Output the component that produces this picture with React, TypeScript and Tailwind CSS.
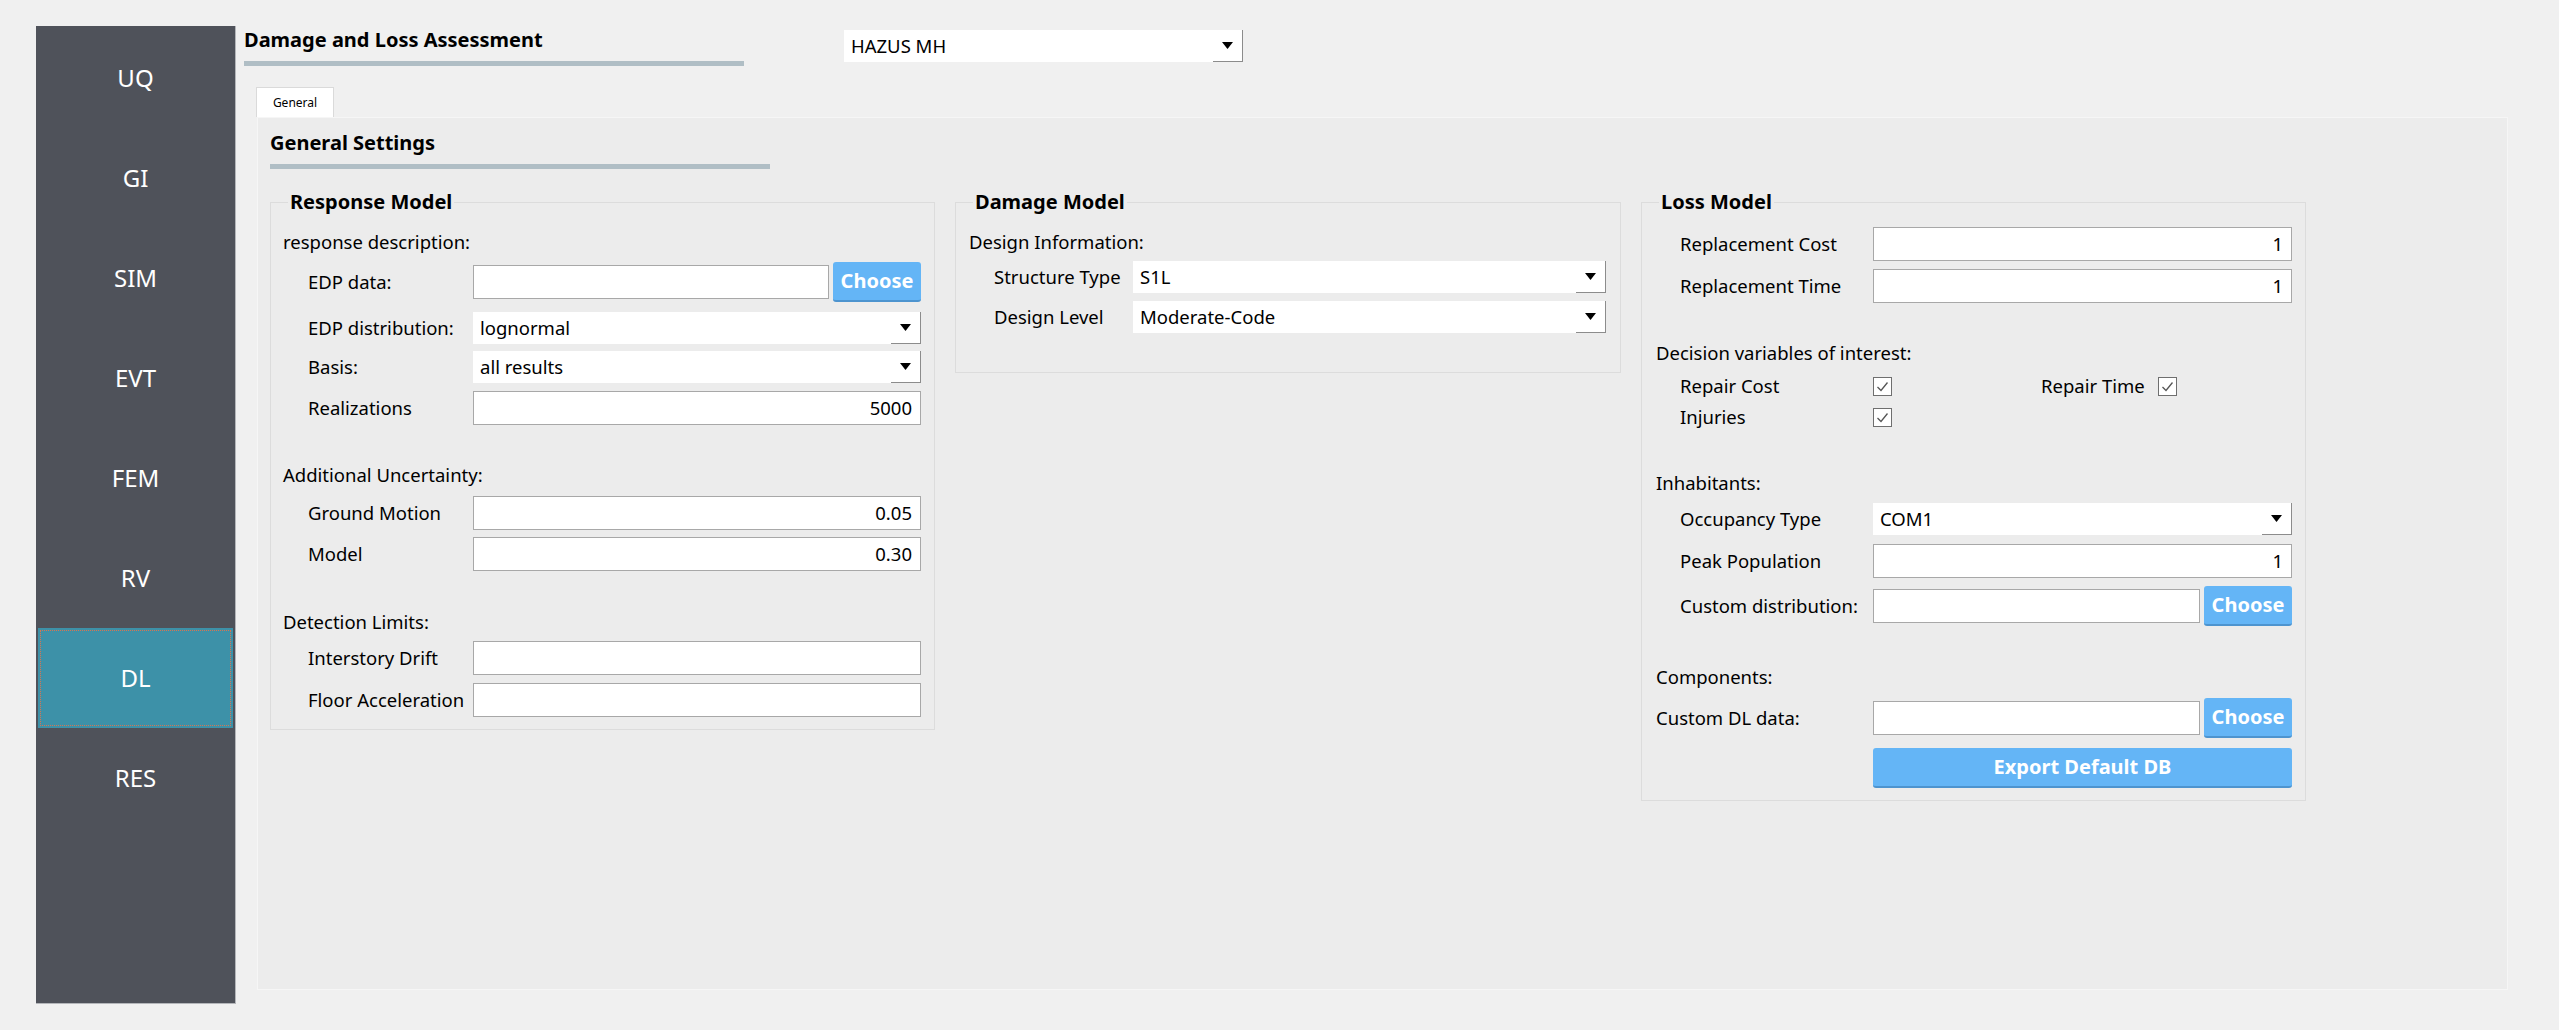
import React from "react";

const SIDEBAR = ["UQ", "GI", "SIM", "EVT", "FEM", "RV", "DL", "RES"];

const Combo = ({ value }: { value: string }) => (
  <div className="flex h-[32px] flex-1 items-center bg-white">
    <span className="flex-1 pl-[7px]">{value}</span>
    <div className="flex h-full w-[30px] items-center justify-center border-r border-b border-[#8c8c8c]">
      <svg width="11" height="7" viewBox="0 0 11 7">
        <polygon points="0,0 11,0 5.5,7" fill="#000" />
      </svg>
    </div>
  </div>
);

const TextBox = ({ value }: { value?: string }) => (
  <div className="flex h-[34px] flex-1 items-center justify-end border border-[#a8a8a8] bg-white px-[8px]">
    {value}
  </div>
);

const BlueButton = ({
  label,
  className,
}: {
  label: string;
  className: string;
}) => (
  <button
    className={`h-[40px] rounded-[3px] border-b-[2px] border-[#4d94cf] bg-[#64b5f6] text-[20px] font-bold text-white ${className}`}
  >
    {label}
  </button>
);

const Check = () => (
  <div className="h-[19px] w-[19px] border border-[#6f6f6f] bg-white">
    <svg width="17" height="17" viewBox="0 0 17 17">
      <polyline
        points="3.5,9 7,12.5 13.5,4.5"
        fill="none"
        stroke="#555"
        strokeWidth="1.3"
      />
    </svg>
  </div>
);

const Row = ({
  label,
  labelClass,
  className,
  children,
}: {
  label: string;
  labelClass: string;
  className: string;
  children: React.ReactNode;
}) => (
  <div className={`flex items-center ${className}`}>
    <span className={labelClass}>{label}</span>
    {children}
  </div>
);

const Group = ({
  title,
  className,
  children,
}: {
  title: string;
  className: string;
  children: React.ReactNode;
}) => (
  <fieldset className={`border border-[#dcdcdc] ${className}`}>
    <legend className="ml-[17px] h-[24px] px-[2px] text-[20px] leading-[24px] font-bold">
      {title}
    </legend>
    {children}
  </fieldset>
);

export default function App() {
  return (
    <div className="flex h-[1030px] w-[2559px] bg-[#f0f0f0] pt-[26px] pl-[36px] font-['Noto_Sans',sans-serif] text-[18.5px] text-black">
      {/* left navigation */}
      <nav className="flex h-[978px] w-[200px] flex-col border-r border-b border-[#b4b6ba] bg-[#4f525a] px-[2px] pt-[2px]">
        {SIDEBAR.map((item) =>
          item === "DL" ? (
            <div
              key={item}
              className="flex h-[100px] items-center justify-center bg-[#3d91a8] p-[2px]"
            >
              <div className="flex h-full w-full items-center justify-center border border-dotted border-[#d9744f] text-[24px] text-white">
                {item}
              </div>
            </div>
          ) : (
            <div
              key={item}
              className="flex h-[100px] items-center justify-center text-[24px] text-white"
            >
              {item}
            </div>
          )
        )}
      </nav>

      <main className="ml-[8px] flex flex-col">
        {/* header */}
        <div className="flex items-start">
          <div className="w-[500px]">
            <h1 className="mt-[2px] text-[20px] leading-[24px] font-bold">
              Damage and Loss Assessment
            </h1>
            <div className="mt-[9px] h-[5px] bg-[#b0bec5]" />
          </div>
          <div className="mt-[4px] ml-[100px] flex w-[399px]">
            <Combo value="HAZUS MH" />
          </div>
        </div>

        {/* tab */}
        <div className="mt-[21px] ml-[12px] flex h-[30px] w-[78px] items-center justify-center border border-b-0 border-[#dadada] bg-white text-[12px]">
          General
        </div>

        {/* pane */}
        <section className="ml-[13px] h-[873px] w-[2251px] border border-[#f6f6f6] bg-[#ececec] pt-[13px] pl-[12px]">
          <h2 className="text-[20px] leading-[24px] font-bold">General Settings</h2>
          <div className="mt-[9px] h-[5px] w-[500px] bg-[#b0bec5]" />

          <div className="mt-[21px] flex items-start gap-[20px]">
            {/* Response Model */}
            <Group title="Response Model" className="w-[665px]">
              <div className="pt-[16px] pr-[13px] pb-[12px] pl-[12px]">
                <p className="leading-[24px]">response description:</p>
                <Row
                  label="EDP data:"
                  labelClass="w-[165px] pl-[25px] box-content"
                  className="mt-[8px] h-[40px]"
                >
                  <TextBox />
                  <BlueButton label="Choose" className="ml-[4px] w-[88px]" />
                </Row>
                <Row
                  label="EDP distribution:"
                  labelClass="w-[165px] pl-[25px] box-content"
                  className="mt-[10px]"
                >
                  <Combo value="lognormal" />
                </Row>
                <Row
                  label="Basis:"
                  labelClass="w-[165px] pl-[25px] box-content"
                  className="mt-[7px]"
                >
                  <Combo value="all results" />
                </Row>
                <Row
                  label="Realizations"
                  labelClass="w-[165px] pl-[25px] box-content"
                  className="mt-[8px]"
                >
                  <TextBox value="5000" />
                </Row>

                <p className="mt-[38px] leading-[24px]">Additional Uncertainty:</p>
                <Row
                  label="Ground Motion"
                  labelClass="w-[165px] pl-[25px] box-content"
                  className="mt-[9px]"
                >
                  <TextBox value="0.05" />
                </Row>
                <Row
                  label="Model"
                  labelClass="w-[165px] pl-[25px] box-content"
                  className="mt-[7px]"
                >
                  <TextBox value="0.30" />
                </Row>

                <p className="mt-[39px] leading-[24px]">Detection Limits:</p>
                <Row
                  label="Interstory Drift"
                  labelClass="w-[165px] pl-[25px] box-content"
                  className="mt-[7px]"
                >
                  <TextBox />
                </Row>
                <Row
                  label="Floor Acceleration"
                  labelClass="w-[165px] pl-[25px] box-content whitespace-nowrap"
                  className="mt-[8px]"
                >
                  <TextBox />
                </Row>
              </div>
            </Group>

            {/* Damage Model */}
            <Group title="Damage Model" className="w-[666px]">
              <div className="pt-[16px] pr-[14px] pb-[39px] pl-[13px]">
                <p className="leading-[24px]">Design Information:</p>
                <Row
                  label="Structure Type"
                  labelClass="w-[139px] pl-[25px] box-content whitespace-nowrap"
                  className="mt-[7px]"
                >
                  <Combo value="S1L" />
                </Row>
                <Row
                  label="Design Level"
                  labelClass="w-[139px] pl-[25px] box-content"
                  className="mt-[8px]"
                >
                  <Combo value="Moderate-Code" />
                </Row>
              </div>
            </Group>

            {/* Loss Model */}
            <Group title="Loss Model" className="w-[665px]">
              <div className="pt-[13px] pr-[13px] pb-[12px] pl-[14px]">
                <Row
                  label="Replacement Cost"
                  labelClass="w-[193px] pl-[24px] box-content"
                  className=""
                >
                  <TextBox value="1" />
                </Row>
                <Row
                  label="Replacement Time"
                  labelClass="w-[193px] pl-[24px] box-content"
                  className="mt-[8px]"
                >
                  <TextBox value="1" />
                </Row>

                <p className="mt-[38px] leading-[24px]">
                  Decision variables of interest:
                </p>
                <Row
                  label="Repair Cost"
                  labelClass="w-[193px] pl-[24px] box-content"
                  className="mt-[9px] h-[24px]"
                >
                  <Check />
                  <span className="ml-[149px] w-[117px]">Repair Time</span>
                  <Check />
                </Row>
                <Row
                  label="Injuries"
                  labelClass="w-[193px] pl-[24px] box-content"
                  className="mt-[7px] h-[24px]"
                >
                  <Check />
                </Row>

                <p className="mt-[42px] leading-[24px]">Inhabitants:</p>
                <Row
                  label="Occupancy Type"
                  labelClass="w-[193px] pl-[24px] box-content"
                  className="mt-[8px]"
                >
                  <Combo value="COM1" />
                </Row>
                <Row
                  label="Peak Population"
                  labelClass="w-[193px] pl-[24px] box-content"
                  className="mt-[9px]"
                >
                  <TextBox value="1" />
                </Row>
                <Row
                  label="Custom distribution:"
                  labelClass="w-[193px] pl-[24px] box-content whitespace-nowrap"
                  className="mt-[8px] h-[40px]"
                >
                  <TextBox />
                  <BlueButton label="Choose" className="ml-[4px] w-[88px]" />
                </Row>

                <p className="mt-[39px] leading-[24px]">Components:</p>
                <Row
                  label="Custom DL data:"
                  labelClass="w-[217px]"
                  className="mt-[9px] h-[40px]"
                >
                  <TextBox />
                  <BlueButton label="Choose" className="ml-[4px] w-[88px]" />
                </Row>
                <div className="mt-[10px] flex pl-[217px]">
                  <BlueButton label="Export Default DB" className="flex-1" />
                </div>
              </div>
            </Group>
          </div>
        </section>
      </main>
    </div>
  );
}
